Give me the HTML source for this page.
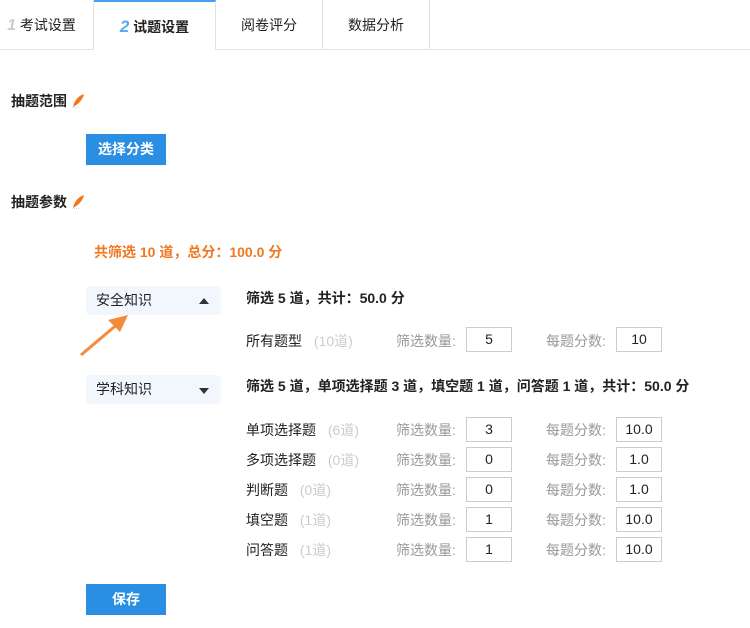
<!DOCTYPE html>
<html><head><meta charset="utf-8"><style>
*{margin:0;padding:0;box-sizing:border-box}
body{width:750px;height:628px;background:#fff;font-family:"Liberation Sans","Noto Sans CJK SC",sans-serif;font-size:13px;color:#222;position:relative;overflow:hidden}
.a{position:absolute;white-space:nowrap}
.tab{position:absolute;top:0;height:50px;border-right:1px solid #e2e2e2;border-bottom:1px solid #e2e2e2;line-height:50px;text-align:center;font-size:14px}
.b{font-weight:bold;font-size:14px}
.btn{position:absolute;background:#2a8ee2;color:#fff;font-weight:bold;text-align:center;line-height:31px;width:80px;height:31px;font-size:14px}
.box{position:absolute;width:46px;height:25px;border:1px solid #ccc;text-align:center;line-height:23px;font-size:14px}
.g{color:#999}.l{color:#ccc}
.sel{position:absolute;left:86px;width:135px;height:29px;background:#f2f6fd;border-radius:4px;line-height:29px;padding-left:10px;font-size:14px}
.tri{position:absolute;right:12px;top:12px;width:0;height:0;border-left:5px solid transparent;border-right:5px solid transparent}
.leaf{display:inline-block;vertical-align:-2px;margin-left:4px}
</style></head><body>
<div class="tab" style="left:-10px;width:104px;border-left:none"><span style="color:#ccc;font-style:italic;font-weight:bold;font-size:16px">1</span> 考试设置</div>
<div class="tab" style="left:94px;width:122px;border-bottom:none;border-top:2px solid #4a9ff0;line-height:50px;font-weight:bold"><span style="color:#5aa6f0;font-style:italic;font-size:17px">2</span> 试题设置</div>
<div class="tab" style="left:216px;width:107px">阅卷评分</div>
<div class="tab" style="left:323px;width:107px">数据分析</div>
<div class="a" style="left:430px;top:49px;width:320px;border-top:1px solid #e2e2e2"></div>

<div class="a b" style="left:11px;top:91px">抽题范围<svg class="leaf" width="14" height="15"><path d="M2 14 C3 8 7 3 13 1 C12 6 8 11 2 14Z" fill="#f07820"/><line x1="1" y1="15" x2="9" y2="15" stroke="#f7a060" stroke-width="1" stroke-dasharray="1,1"/></svg></div>
<div class="btn" style="left:86px;top:134px">选择分类</div>
<div class="a b" style="left:11px;top:192px">抽题参数<svg class="leaf" width="14" height="15"><path d="M2 14 C3 8 7 3 13 1 C12 6 8 11 2 14Z" fill="#f07820"/><line x1="1" y1="15" x2="9" y2="15" stroke="#f7a060" stroke-width="1" stroke-dasharray="1,1"/></svg></div>
<div class="a b" style="left:94px;top:242px;color:#f07820">共筛选 10 道，总分：100.0 分</div>

<div class="sel" style="top:286px">安全知识<div class="tri" style="border-bottom:6px solid #333"></div></div>
<svg class="a" style="left:76px;top:310px" width="60" height="50"><line x1="5" y1="45" x2="44" y2="12" stroke="#f58a3a" stroke-width="3"/><polygon points="52,5 32,10 44,22" fill="#f58a3a"/></svg>
<div class="sel" style="top:375px">学科知识<div class="tri" style="top:13px;border-top:6px solid #333"></div></div>

<div class="a b" style="left:246px;top:288px">筛选 5 道，共计：50.0 分</div>
<div class="a" style="left:246px;top:331px;font-size:14px">所有题型 <span class="l" style="margin-left:8px">(10道)</span></div>
<div class="a g" style="left:396px;top:331px;font-size:14px">筛选数量:</div><div class="box" style="left:466px;top:327px">5</div>
<div class="a g" style="left:546px;top:331px;font-size:14px">每题分数:</div><div class="box" style="left:616px;top:327px">10</div>

<div class="a b" style="left:246px;top:376px">筛选 5 道，单项选择题 3 道，填空题 1 道，问答题 1 道，共计：50.0 分</div>

<div class="a" style="left:246px;top:420px;font-size:14px">单项选择题 <span class="l" style="margin-left:8px">(6道)</span></div>
<div class="a g" style="left:396px;top:420px;font-size:14px">筛选数量:</div><div class="box" style="left:466px;top:417px">3</div>
<div class="a g" style="left:546px;top:420px;font-size:14px">每题分数:</div><div class="box" style="left:616px;top:417px">10.0</div>

<div class="a" style="left:246px;top:450px;font-size:14px">多项选择题 <span class="l" style="margin-left:8px">(0道)</span></div>
<div class="a g" style="left:396px;top:450px;font-size:14px">筛选数量:</div><div class="box" style="left:466px;top:447px">0</div>
<div class="a g" style="left:546px;top:450px;font-size:14px">每题分数:</div><div class="box" style="left:616px;top:447px">1.0</div>

<div class="a" style="left:246px;top:480px;font-size:14px">判断题 <span class="l" style="margin-left:8px">(0道)</span></div>
<div class="a g" style="left:396px;top:480px;font-size:14px">筛选数量:</div><div class="box" style="left:466px;top:477px">0</div>
<div class="a g" style="left:546px;top:480px;font-size:14px">每题分数:</div><div class="box" style="left:616px;top:477px">1.0</div>

<div class="a" style="left:246px;top:510px;font-size:14px">填空题 <span class="l" style="margin-left:8px">(1道)</span></div>
<div class="a g" style="left:396px;top:510px;font-size:14px">筛选数量:</div><div class="box" style="left:466px;top:507px">1</div>
<div class="a g" style="left:546px;top:510px;font-size:14px">每题分数:</div><div class="box" style="left:616px;top:507px">10.0</div>

<div class="a" style="left:246px;top:540px;font-size:14px">问答题 <span class="l" style="margin-left:8px">(1道)</span></div>
<div class="a g" style="left:396px;top:540px;font-size:14px">筛选数量:</div><div class="box" style="left:466px;top:537px">1</div>
<div class="a g" style="left:546px;top:540px;font-size:14px">每题分数:</div><div class="box" style="left:616px;top:537px">10.0</div>

<div class="btn" style="left:86px;top:584px">保存</div>
</body></html>
